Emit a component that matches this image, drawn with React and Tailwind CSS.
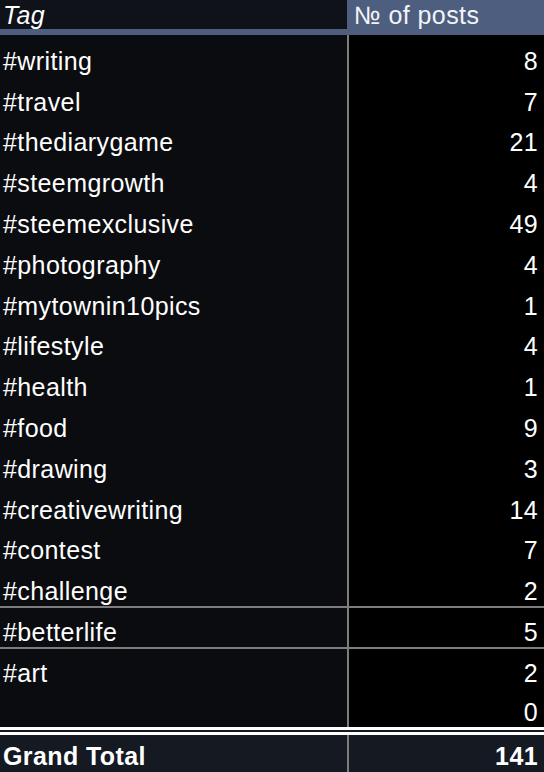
const rows = [
  ["#writing", 8],
  ["#travel", 7],
  ["#thediarygame", 21],
  ["#steemgrowth", 4],
  ["#steemexclusive", 49],
  ["#photography", 4],
  ["#mytownin10pics", 1],
  ["#lifestyle", 4],
  ["#health", 1],
  ["#food", 9],
  ["#drawing", 3],
  ["#creativewriting", 14],
  ["#contest", 7],
  ["#challenge", 2],
];

function Row({ tag, count, className = "" }) {
  return (
    <div className={`grid grid-cols-[347px_1fr] ${className}`}>
      <div className="flex items-end bg-[#0b0c0f] pl-[3px] pb-[2px]">
        <span>{tag}</span>
      </div>
      <div className="flex items-end justify-end border-l-2 border-[#7d7d7d] bg-black pr-[6px] pb-[2px]">
        <span>{count}</span>
      </div>
    </div>
  );
}

export default function App() {
  return (
    <div
      className="w-[544px] h-[772px] overflow-hidden bg-black text-white text-[25px] leading-[25px] tracking-[0.4px]"
      style={{ fontFamily: '"Liberation Sans", Arial, sans-serif' }}
    >
      {/* header */}
      <div className="grid grid-cols-[347px_1fr] h-[35px] border-b-[6px] border-[#4e5e7e]">
        <div className="flex items-end bg-[#0f1219] pl-[3px] pb-[1px] italic">Tag</div>
        <div className="flex items-end bg-[#4e5e7e] pl-[7px] pb-[1px] text-[#f2f4f8]">№ of posts</div>
      </div>

      {rows.map(([tag, count]) => (
        <Row key={tag} tag={tag} count={count} className="h-[40.8px]" />
      ))}

      <Row tag="#betterlife" count={5} className="h-[41px] border-t-2 border-[#7d7d7d]" />
      <Row tag="#art" count={2} className="h-[41px] border-t-2 border-[#7d7d7d]" />
      <Row tag="" count={0} className="h-[39px]" />

      {/* total */}
      <div className="grid grid-cols-[347px_1fr] h-[45px] border-t-[8px] border-double border-white bg-[#151922] font-bold">
        <div className="flex items-end pl-[3px] pb-[3px]">Grand Total</div>
        <div className="flex items-end justify-end border-l-2 border-[#7d7d7d] pr-[6px] pb-[3px]">141</div>
      </div>
    </div>
  );
}
